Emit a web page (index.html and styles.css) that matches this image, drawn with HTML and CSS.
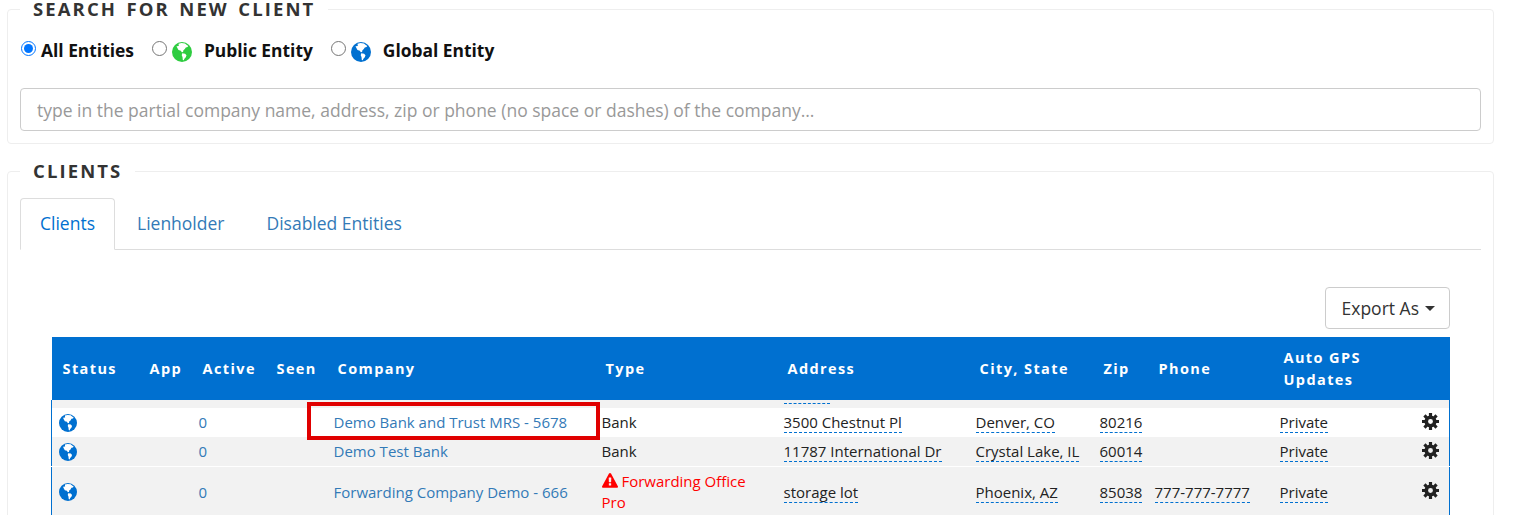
FILE: index.html
```html
<!DOCTYPE html>
<html lang="en">
<head>
<meta charset="utf-8">
<title>Clients</title>
<link rel="stylesheet" href="styles.css">
</head>
<body>
<svg class="defs" width="0" height="0" aria-hidden="true">
  <defs>
    <symbol id="globe" viewBox="0 0 20 20">
      <circle cx="10" cy="10" r="10" fill="currentColor"/>
      <path fill="#fff" d="M6.500 1.800 9.500 1l3.500.4 1.500 1.300 1.800 1.200-.8 1.200-1.700.3-1 1.700-1.500 1.300-.2 1.500-1.300.3-1-1.500-2.300-.6-1-1.800-1-2.100L6.800 4z"/>
      <path fill="#fff" d="m10.200 11.300 2.900.5 1.400 1.400-.7 2.100-1.400 1.500-.6 1.500-1-.4-.3-2.800-.8-1.800z"/>
    </symbol>
    <symbol id="cog" viewBox="0 0 16 16">
      <g fill="none" stroke="currentColor">
        <circle cx="8" cy="8" r="4" stroke-width="3.400"/>
        <path stroke-width="3" d="M8 0v3M8 13v3M0 8h3M13 8h3M2.300 2.300l2.200 2.200M11.500 11.500l2.200 2.200M13.700 2.300l-2.200 2.200M4.500 11.500l-2.200 2.200"/>
      </g>
    </symbol>
    <symbol id="warn" viewBox="0 0 1792 1792">
      <path fill="currentColor" d="M1024 1375v-190q0-14-9.500-23.500t-22.500-9.500h-192q-13 0-22.500 9.500t-9.500 23.500v190q0 14 9.500 23.500t22.500 9.500h192q13 0 22.500-9.500t9.500-23.500zm-2-374l18-459q0-12-10-19-13-11-24-11h-220q-11 0-24 11-10 7-10 21l17 457q0 10 10 16.500t24 6.500h185q14 0 23.500-6.500t10.500-16.500zm-14-934l768 1408q35 63-2 126-17 29-46.500 46t-63.500 17h-1536q-34 0-63.500-17t-46.500-46q-37-63-2-126l768-1408q17-31 47-49t65-18 65 18 47 49z"/>
    </symbol>
  </defs>
</svg>

<main class="page">
  <fieldset class="panel panel-search">
    <legend class="legend legend-wide">SEARCH FOR NEW CLIENT</legend>
    <div class="radios">
      <label class="radio"><input type="radio" name="entity" checked><span class="radio-text">All Entities</span></label>
      <label class="radio"><input type="radio" name="entity"><svg class="globe-lg green"><use href="#globe"/></svg><span class="radio-text pad">Public Entity</span></label>
      <label class="radio"><input type="radio" name="entity"><svg class="globe-lg blue"><use href="#globe"/></svg><span class="radio-text pad">Global Entity</span></label>
    </div>
    <input class="search" type="text" placeholder="type in the partial company name, address, zip or phone (no space or dashes) of the company...">
  </fieldset>

  <fieldset class="panel panel-clients">
    <legend class="legend">CLIENTS</legend>
    <nav class="tabs">
      <a class="tab active">Clients</a>
      <a class="tab">Lienholder</a>
      <a class="tab">Disabled Entities</a>
    </nav>
    <div class="toolbar">
      <button class="export" type="button">Export As<span class="caret"></span></button>
    </div>
    <div class="table-wrap">
      <table class="grid">
        <colgroup>
          <col class="c-status"><col class="c-app"><col class="c-active"><col class="c-seen"><col class="c-company"><col class="c-type"><col class="c-address"><col class="c-city"><col class="c-zip"><col class="c-phone"><col class="c-gps"><col class="c-gear">
        </colgroup>
        <thead>
          <tr>
            <th>Status</th><th>App</th><th>Active</th><th>Seen</th><th>Company</th><th>Type</th><th>Address</th><th>City, State</th><th>Zip</th><th>Phone</th><th>Auto GPS Updates</th><th></th>
          </tr>
        </thead>
        <tbody>
          <tr class="spacer">
            <td colspan="6"></td><td><div class="stub"></div></td><td colspan="5"></td>
          </tr>
          <tr class="white">
            <td><svg class="globe blue"><use href="#globe"/></svg></td><td></td><td><a class="link">0</a></td><td></td>
            <td><a class="link">Demo Bank and Trust MRS - 5678</a></td><td>Bank</td>
            <td><span class="edit">3500 Chestnut Pl</span></td><td><span class="edit">Denver, CO</span></td><td><span class="edit">80216</span></td><td></td><td><span class="edit">Private</span></td>
            <td><svg class="cog"><use href="#cog"/></svg></td>
          </tr>
          <tr>
            <td><svg class="globe blue"><use href="#globe"/></svg></td><td></td><td><a class="link">0</a></td><td></td>
            <td><a class="link">Demo Test Bank</a></td><td>Bank</td>
            <td><span class="edit">11787 International Dr</span></td><td><span class="edit">Crystal Lake, IL</span></td><td><span class="edit">60014</span></td><td></td><td><span class="edit">Private</span></td>
            <td><svg class="cog"><use href="#cog"/></svg></td>
          </tr>
          <tr>
            <td><svg class="globe blue"><use href="#globe"/></svg></td><td></td><td><a class="link">0</a></td><td></td>
            <td><a class="link">Forwarding Company Demo - 666</a></td><td class="alert"><svg class="warn"><use href="#warn"/></svg> Forwarding Office Pro</td>
            <td><span class="edit">storage lot</span></td><td><span class="edit">Phoenix, AZ</span></td><td><span class="edit">85038</span></td><td><span class="edit">777-777-7777</span></td><td><span class="edit">Private</span></td>
            <td><svg class="cog"><use href="#cog"/></svg></td>
          </tr>
        </tbody>
      </table>
      <div class="highlight"></div>
    </div>
  </fieldset>
</main>
</body>
</html>
```
FILE: styles.css
```css
* { box-sizing: border-box; }
html, body { height: 515px; overflow: hidden; }
body { margin: 0; background: #fff; color: #333; font-family: "Open Sans", sans-serif; font-size: 14px; }
.defs { position: absolute; }
.page { width: 1494px; padding-left: 7px; }

.panel { margin: 0 0 18px; padding: 0 12px 12px; border: 1px solid #eee; border-radius: 4px; min-width: 0; }
.legend { margin-left: 0; padding: 0 13px 1px; font-size: 18.500px; line-height: 18px; font-weight: 700; letter-spacing: 2.100px; color: #333; }
.legend-wide { word-spacing: 2.500px; }

.radios { display: flex; align-items: center; height: 30px; margin-top: 16px; }
.radio { display: flex; align-items: center; margin-right: 17px; font-size: 17.400px; font-weight: 700; color: #111; }
.radio input { margin: 0 5px 4px 1px; width: 15px; height: 15px; }
.radio-text.pad { margin-left: 12px; }
.globe-lg { width: 20px; height: 20px; margin: 3px 0 0; }
.green { color: #2ecc40; }
.blue { color: #0070d0; }

.search { display: block; width: 100%; height: 43px; margin-top: 23px; padding: 0 16px; border: 1px solid #ccc; border-radius: 4px; font: 17.500px "Open Sans", sans-serif; color: #333; }
.search::placeholder { color: #999; opacity: 1; }

.tabs { display: flex; height: 52px; margin-top: 17px; border-bottom: 1px solid #ddd; }
.tab { padding: 0 19px; margin-right: 2px; line-height: 48px; font-size: 17.500px; color: #337ab7; border: 1px solid transparent; }
.tab.active { height: 52px; background: #fff; color: #0070d0; border-color: #ddd #ddd #fff; border-radius: 4px 4px 0 0; }

.toolbar { display: flex; justify-content: flex-end; padding: 37px 31px 8px 0; }
.export { display: flex; align-items: center; height: 42px; padding: 0 14px 0 16px; border: 1px solid #ccc; border-radius: 4px; background: #fff; font: 17.500px "Open Sans", sans-serif; color: #333; }
.caret { width: 0; height: 0; margin-left: 6px; border-top: 5px solid #333; border-left: 5px solid transparent; border-right: 5px solid transparent; }

.table-wrap { position: relative; margin-left: 31px; width: 1398px; }
.grid { width: 1398px; table-layout: fixed; border-collapse: collapse; font-size: 15px; line-height: 21px; color: #222; }
.c-status { width: 87px; }
.c-app { width: 53px; }
.c-active { width: 74px; }
.c-seen { width: 61px; }
.c-company { width: 268px; }
.c-type { width: 182px; }
.c-address { width: 192px; }
.c-city { width: 124px; }
.c-zip { width: 55px; }
.c-phone { width: 125px; }
.c-gps { width: 143px; }
.c-gear { width: 34px; }

th { height: 63px; padding: 0 6px 0 11px; background: #0070d0; color: #fff; font-size: 14.500px; font-weight: 700; letter-spacing: 1.400px; line-height: 22px; text-align: left; }
td { padding: 4px 5px 4px 7px; vertical-align: middle; background: #f2f2f2; border-bottom: 1px solid #fff; }
td:first-child { border-left: 1px solid #0070d0; }
td:last-child { border-right: 1px solid #0070d0; }
tr.white td { background: #fff; border-bottom: 0; }
tr.spacer td { height: 8px; padding: 0 6px 0 7px; border-bottom: 0; vertical-align: top; }
.stub { width: 46px; height: 4px; border-bottom: 1px dashed #0070d0; }
.link { color: #337ab7; }
.edit { border-bottom: 1px dashed #0070d0; }
td.alert { color: #f00; padding-right: 24px; }
.globe { display: block; width: 18px; height: 18px; }
.cog { display: block; width: 17px; height: 17px; color: #222; margin: -3px 0 0 -1px; }
.warn { display: inline-block; width: 16px; height: 16px; vertical-align: -2px; }
.highlight { position: absolute; left: 256px; top: 65px; width: 293px; height: 38px; border: 4px solid #e00000; }
```
